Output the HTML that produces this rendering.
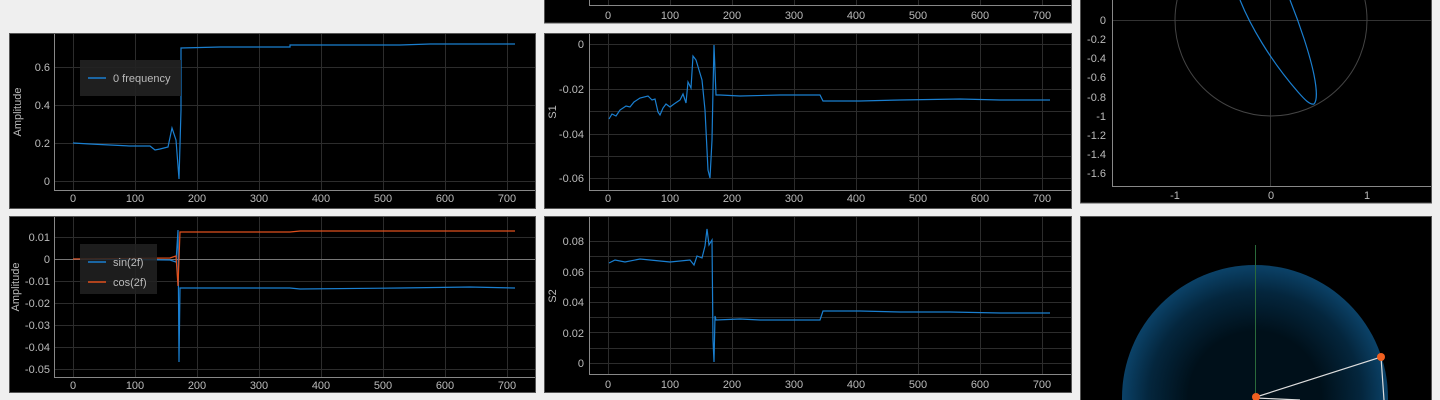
<!DOCTYPE html><html><head><style>html,body{margin:0;background:#efefef;width:1440px;height:400px;overflow:hidden}svg{display:block}text{font-family:"Liberation Sans",sans-serif;font-size:11px;fill:#bbb}</style></head><body>
<svg width="1440" height="400" viewBox="0 0 1440 400">
<defs><radialGradient id="sg" cx="0.5" cy="0.5" r="0.5"><stop offset="0.5" stop-color="#00101a"/><stop offset="0.8" stop-color="#04263d"/><stop offset="1" stop-color="#0b4268"/></radialGradient></defs>
<rect width="1440" height="400" fill="#efefef"/>
<g fill="#000" stroke="#555" stroke-width="1">
<rect x="9.5" y="33.5" width="526" height="175"/>
<rect x="9.5" y="216.5" width="526" height="176"/>
<rect x="544.5" y="-2" width="527" height="25"/>
<rect x="544.5" y="33.5" width="527" height="175"/>
<rect x="544.5" y="216.5" width="527" height="176"/>
<rect x="1080.5" y="-2" width="351" height="205"/>
<rect x="1080.5" y="216.5" width="351" height="184"/>
</g>
<!-- LEFT ROW1 -->
<g stroke="#2c2c2c" stroke-width="1">
<line x1="73.5" y1="34" x2="73.5" y2="190"/><line x1="135.5" y1="34" x2="135.5" y2="190"/><line x1="197.5" y1="34" x2="197.5" y2="190"/><line x1="259.5" y1="34" x2="259.5" y2="190"/><line x1="321.5" y1="34" x2="321.5" y2="190"/><line x1="383.5" y1="34" x2="383.5" y2="190"/><line x1="445.5" y1="34" x2="445.5" y2="190"/><line x1="507.5" y1="34" x2="507.5" y2="190"/>
<line x1="54" y1="181.5" x2="535" y2="181.5"/><line x1="54" y1="143.5" x2="535" y2="143.5"/><line x1="54" y1="105.5" x2="535" y2="105.5"/><line x1="54" y1="67.5" x2="535" y2="67.5"/>
</g>
<g stroke="#888"><line x1="54.5" y1="34" x2="54.5" y2="190"/><line x1="54" y1="190.5" x2="535" y2="190.5"/></g>
<g text-anchor="end"><text x="50" y="71">0.6</text><text x="50" y="109">0.4</text><text x="50" y="147">0.2</text><text x="50" y="185">0</text></g>
<g text-anchor="middle"><text x="73" y="202">0</text><text x="135" y="202">100</text><text x="197" y="202">200</text><text x="259" y="202">300</text><text x="321" y="202">400</text><text x="383" y="202">500</text><text x="445" y="202">600</text><text x="507" y="202">700</text></g>
<text transform="translate(21,112) rotate(-90)" text-anchor="middle" font-size="10">Amplitude</text>
<path d="M73 143 L90 144 L110 145 L130 146 L150 146 L155 150 L160 149 L168 147 L172 128 L176 140 L179 179 L181 110 L181 48 L220 47 L290 47 L290 45 L400 45 L430 44 L515 44" fill="none" stroke="#1a7fd0" stroke-width="1.2"/>
<rect x="80" y="60" width="101" height="36" fill="#222" fill-opacity="0.9"/>
<line x1="88" y1="78" x2="106" y2="78" stroke="#1a7fd0" stroke-width="1.5"/><text x="113" y="82">0 frequency</text>
<!-- LEFT ROW2 -->
<g stroke="#2c2c2c">
<line x1="73.5" y1="217" x2="73.5" y2="378"/><line x1="135.5" y1="217" x2="135.5" y2="378"/><line x1="197.5" y1="217" x2="197.5" y2="378"/><line x1="259.5" y1="217" x2="259.5" y2="378"/><line x1="321.5" y1="217" x2="321.5" y2="378"/><line x1="383.5" y1="217" x2="383.5" y2="378"/><line x1="445.5" y1="217" x2="445.5" y2="378"/><line x1="507.5" y1="217" x2="507.5" y2="378"/>
<line x1="54" y1="237.5" x2="535" y2="237.5"/><line x1="54" y1="281.5" x2="535" y2="281.5"/><line x1="54" y1="303.5" x2="535" y2="303.5"/><line x1="54" y1="325.5" x2="535" y2="325.5"/><line x1="54" y1="347.5" x2="535" y2="347.5"/><line x1="54" y1="369.5" x2="535" y2="369.5"/>
</g>
<line x1="54" y1="259.5" x2="535" y2="259.5" stroke="#777"/>
<g stroke="#888"><line x1="54.5" y1="217" x2="54.5" y2="378"/><line x1="54" y1="377.5" x2="535" y2="377.5"/></g>
<g text-anchor="end"><text x="50" y="241">0.01</text><text x="50" y="263">0</text><text x="50" y="285">-0.01</text><text x="50" y="307">-0.02</text><text x="50" y="329">-0.03</text><text x="50" y="351">-0.04</text><text x="50" y="373">-0.05</text></g>
<g text-anchor="middle"><text x="73" y="389">0</text><text x="135" y="389">100</text><text x="197" y="389">200</text><text x="259" y="389">300</text><text x="321" y="389">400</text><text x="383" y="389">500</text><text x="445" y="389">600</text><text x="507" y="389">700</text></g>
<text transform="translate(19,287) rotate(-90)" text-anchor="middle" font-size="10">Amplitude</text>
<path d="M73 259 L170 260 L176 262 L178 230 L179 362 L180 288 L290 288 L300 289 L400 288 L470 287 L515 288" fill="none" stroke="#1a7fd0" stroke-width="1.2"/>
<path d="M73 259 L170 258 L176 256 L178 286 L180 232 L290 232 L300 231 L400 231 L515 231" fill="none" stroke="#e0501c" stroke-width="1.2"/>
<rect x="80" y="244" width="77" height="50" fill="#222" fill-opacity="0.85"/>
<line x1="88" y1="262" x2="106" y2="262" stroke="#1a7fd0" stroke-width="1.5"/><text x="113" y="266">sin(2f)</text>
<line x1="88" y1="282" x2="106" y2="282" stroke="#e0501c" stroke-width="1.5"/><text x="113" y="286">cos(2f)</text>
<!-- MIDDLE TOP partial -->
<g stroke="#2c2c2c"><line x1="608.5" y1="0" x2="608.5" y2="5"/><line x1="670.5" y1="0" x2="670.5" y2="5"/><line x1="732.5" y1="0" x2="732.5" y2="5"/><line x1="794.5" y1="0" x2="794.5" y2="5"/><line x1="856.5" y1="0" x2="856.5" y2="5"/><line x1="918.5" y1="0" x2="918.5" y2="5"/><line x1="980.5" y1="0" x2="980.5" y2="5"/><line x1="1042.5" y1="0" x2="1042.5" y2="5"/></g>
<g stroke="#888"><line x1="589.5" y1="0" x2="589.5" y2="5"/><line x1="589" y1="5.5" x2="1071" y2="5.5"/></g>
<g text-anchor="middle"><text x="608" y="19">0</text><text x="670" y="19">100</text><text x="732" y="19">200</text><text x="794" y="19">300</text><text x="856" y="19">400</text><text x="918" y="19">500</text><text x="980" y="19">600</text><text x="1042" y="19">700</text></g>
<!-- MIDDLE ROW1 -->
<g stroke="#2c2c2c">
<line x1="608.5" y1="34" x2="608.5" y2="190"/><line x1="670.5" y1="34" x2="670.5" y2="190"/><line x1="732.5" y1="34" x2="732.5" y2="190"/><line x1="794.5" y1="34" x2="794.5" y2="190"/><line x1="856.5" y1="34" x2="856.5" y2="190"/><line x1="918.5" y1="34" x2="918.5" y2="190"/><line x1="980.5" y1="34" x2="980.5" y2="190"/><line x1="1042.5" y1="34" x2="1042.5" y2="190"/>
<line x1="589" y1="44.5" x2="1071" y2="44.5"/><line x1="589" y1="67.5" x2="1071" y2="67.5"/><line x1="589" y1="89.5" x2="1071" y2="89.5"/><line x1="589" y1="111.5" x2="1071" y2="111.5"/><line x1="589" y1="134.5" x2="1071" y2="134.5"/><line x1="589" y1="156.5" x2="1071" y2="156.5"/><line x1="589" y1="178.5" x2="1071" y2="178.5"/>
</g>
<g stroke="#888"><line x1="589.5" y1="34" x2="589.5" y2="190"/><line x1="589" y1="190.5" x2="1071" y2="190.5"/></g>
<g text-anchor="end"><text x="584" y="48">0</text><text x="584" y="93">-0.02</text><text x="584" y="138">-0.04</text><text x="584" y="182">-0.06</text></g>
<g text-anchor="middle"><text x="608" y="202">0</text><text x="670" y="202">100</text><text x="732" y="202">200</text><text x="794" y="202">300</text><text x="856" y="202">400</text><text x="918" y="202">500</text><text x="980" y="202">600</text><text x="1042" y="202">700</text></g>
<text transform="translate(556,112) rotate(-90)" text-anchor="middle" font-size="10">S1</text>
<path d="M609 119 L612 114 L616 116 L620 110 L626 106 L630 107 L634 102 L640 98 L648 96 L652 100 L655 99 L658 112 L660 115 L663 108 L666 104 L670 107 L674 104 L680 100 L683 94 L686 103 L688 82 L691 88 L693 56 L696 60 L699 70 L702 80 L705 110 L708 170 L710 178 L712 140 L713 90 L714 45 L715 70 L716 95 L720 95 L740 96 L780 95 L820 95 L823 101 L860 101 L900 100 L960 99 L1000 100 L1050 100" fill="none" stroke="#1a7fd0" stroke-width="1.2"/>
<!-- MIDDLE ROW2 -->
<g stroke="#2c2c2c">
<line x1="608.5" y1="217" x2="608.5" y2="374"/><line x1="670.5" y1="217" x2="670.5" y2="374"/><line x1="732.5" y1="217" x2="732.5" y2="374"/><line x1="794.5" y1="217" x2="794.5" y2="374"/><line x1="856.5" y1="217" x2="856.5" y2="374"/><line x1="918.5" y1="217" x2="918.5" y2="374"/><line x1="980.5" y1="217" x2="980.5" y2="374"/><line x1="1042.5" y1="217" x2="1042.5" y2="374"/>
<line x1="589" y1="241.5" x2="1071" y2="241.5"/><line x1="589" y1="256.5" x2="1071" y2="256.5"/><line x1="589" y1="271.5" x2="1071" y2="271.5"/><line x1="589" y1="287.5" x2="1071" y2="287.5"/><line x1="589" y1="302.5" x2="1071" y2="302.5"/><line x1="589" y1="317.5" x2="1071" y2="317.5"/><line x1="589" y1="332.5" x2="1071" y2="332.5"/><line x1="589" y1="348.5" x2="1071" y2="348.5"/><line x1="589" y1="363.5" x2="1071" y2="363.5"/>
</g>
<g stroke="#888"><line x1="589.5" y1="217" x2="589.5" y2="374"/><line x1="589" y1="374.5" x2="1071" y2="374.5"/></g>
<g text-anchor="end"><text x="584" y="245">0.08</text><text x="584" y="276">0.06</text><text x="584" y="306">0.04</text><text x="584" y="337">0.02</text><text x="584" y="367">0</text></g>
<g text-anchor="middle"><text x="608" y="388">0</text><text x="670" y="388">100</text><text x="732" y="388">200</text><text x="794" y="388">300</text><text x="856" y="388">400</text><text x="918" y="388">500</text><text x="980" y="388">600</text><text x="1042" y="388">700</text></g>
<text transform="translate(556,296) rotate(-90)" text-anchor="middle" font-size="10">S2</text>
<path d="M609 263 L615 260 L625 262 L640 259 L660 261 L670 262 L690 260 L694 265 L697 256 L702 258 L705 246 L707 229 L709 245 L712 240 L713 340 L714 362 L715 316 L716 320 L740 319 L760 320 L780 320 L820 320 L823 311 L860 311 L900 312 L950 312 L1000 313 L1050 313" fill="none" stroke="#1a7fd0" stroke-width="1.2"/>
<!-- RIGHT TOP -->
<g stroke="#333"><line x1="1112" y1="20.5" x2="1431" y2="20.5"/><line x1="1270.5" y1="0" x2="1270.5" y2="186"/></g>
<circle cx="1271" cy="20" r="96" fill="none" stroke="#444"/>
<g stroke="#888"><line x1="1112.5" y1="0" x2="1112.5" y2="186"/><line x1="1112" y1="186.5" x2="1431" y2="186.5"/></g>
<g text-anchor="end"><text x="1106" y="24">0</text><text x="1106" y="43">-0.2</text><text x="1106" y="62">-0.4</text><text x="1106" y="81">-0.6</text><text x="1106" y="101">-0.8</text><text x="1106" y="120">-1</text><text x="1106" y="139">-1.2</text><text x="1106" y="158">-1.4</text><text x="1106" y="177">-1.6</text></g>
<g text-anchor="middle"><text x="1175" y="199">-1</text><text x="1271" y="199">0</text><text x="1367" y="199">1</text></g>
<path d="M1240 0 C1250 25 1270 60 1298 92 C1305 100 1310 105 1314 104 C1318 100 1316 85 1314 75 C1310 55 1300 25 1290 0" fill="none" stroke="#1a7fd0" stroke-width="1.2"/>
<!-- RIGHT BOTTOM sphere -->
<circle cx="1255" cy="398" r="133" fill="url(#sg)"/>
<line x1="1255.5" y1="245" x2="1255.5" y2="400" stroke="#2a6a3a"/>
<path d="M1256 397 L1381 357 L1384 400 M1256 398 L1300 400" fill="none" stroke="#ddd" stroke-width="1.2"/>
<circle cx="1381" cy="357" r="4" fill="#f06020"/>
<circle cx="1256" cy="397" r="4" fill="#f06020"/>
</svg></body></html>
